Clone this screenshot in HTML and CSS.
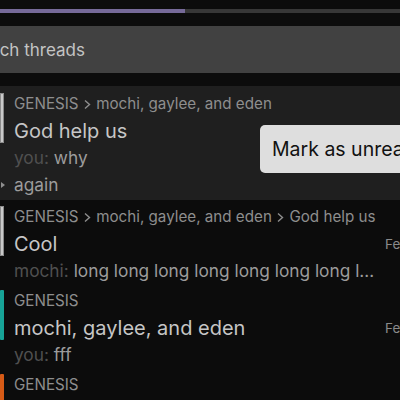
FILE: index.html
```html
<!DOCTYPE html>
<html>
<head>
  <meta name="viewport" content="width=device-width,initial-scale=1.0">
  <title>Threads</title>
  <link rel="stylesheet" href="styles.css">
</head>
<body>
  <div class="top">
    <div class="progress"><div class="progress-fill"></div></div>
    <div class="search">Search threads</div>
  </div>

  <ul class="threads">
    <li class="thread thread-hover">
      <span class="bar bar-grey"></span>
      <div class="path">GENESIS <svg class="sep" width="9" height="11" viewBox="0 0 9 11"><path d="M2 1.5 L6.5 5.5 L2 9.5" fill="none" stroke="currentColor" stroke-width="1.4"/></svg> mochi, gaylee, and eden</div>
      <div class="title">God help us</div>
      <div class="preview"><span class="author">you:</span> why</div>
      <svg class="more" width="6" height="8" viewBox="0 0 6 8"><path d="M0 1 L4 4 L0 7 Z" fill="currentColor"/></svg>
      <div class="preview">again</div>
    </li>
    <li class="thread">
      <span class="bar bar-grey"></span>
      <div class="path">GENESIS <svg class="sep" width="9" height="11" viewBox="0 0 9 11"><path d="M2 1.5 L6.5 5.5 L2 9.5" fill="none" stroke="currentColor" stroke-width="1.4"/></svg> mochi, gaylee, and eden <svg class="sep" width="9" height="11" viewBox="0 0 9 11"><path d="M2 1.5 L6.5 5.5 L2 9.5" fill="none" stroke="currentColor" stroke-width="1.4"/></svg> God help us</div>
      <div class="title">Cool</div>
      <div class="date">Feb 12</div>
      <div class="preview"><span class="author">mochi:</span> long long long long long long long long long long</div>
    </li>
    <li class="thread">
      <span class="bar bar-teal"></span>
      <div class="path">GENESIS</div>
      <div class="title">mochi, gaylee, and eden</div>
      <div class="date">Feb 10</div>
      <div class="preview"><span class="author">you:</span> fff</div>
    </li>
    <li class="thread">
      <span class="bar bar-orange"></span>
      <div class="path">GENESIS</div>
      <div class="title">general</div>
      <div class="date">Feb 8</div>
      <div class="preview"><span class="author">eden:</span> ok</div>
    </li>
  </ul>

  <div class="tooltip">Mark as unread</div>
</body>
</html>
```

FILE: styles.css
```css
body {
  margin: 0;
  background: #0c0c0c;
  font-family: Inter, "Noto Sans", sans-serif;
  overflow: hidden;
  width: 400px;
  height: 400px;
  position: relative;
}

.top {
  padding-top: 9px;
}

.progress {
  height: 4px;
  background: #373737;
}

.progress-fill {
  width: 185px;
  height: 100%;
  background: #766a99;
}

.search {
  margin-top: 13px;
  height: 47px;
  line-height: 49px;
  background: #414141;
  color: #c4c4c4;
  font-size: 17px;
  text-indent: -37px;
  white-space: nowrap;
  overflow: hidden;
}

.threads {
  list-style-type: none;
  margin: 13px 0 0;
  padding: 0;
}

.thread {
  display: grid;
  grid-template-columns: 14px 364px 60px;
  grid-auto-rows: 27px;
  padding-top: 3px;
  width: 440px;
}

.thread-hover {
  background: #1f1f1f;
  padding: 4px 0 2px;
}

.bar {
  grid-column: 1;
  grid-row: 1 / 3;
  width: 4px;
  height: 50px;
  margin-top: 3px;
  border-radius: 1px;
}

.bar-grey {
  background: #c9c9c9;
  box-shadow: inset 0 0 0 1px #8a8a8a;
}

.bar-teal {
  background: #17a397;
}

.bar-orange {
  background: #d65a16;
}

.path,
.title,
.preview {
  grid-column: 2;
  white-space: nowrap;
  overflow: hidden;
  text-overflow: ellipsis;
  line-height: 27px;
}

.path {
  font-size: 15.2px;
  color: #8e8e8e;
}

.sep {
  vertical-align: -1px;
}

.title {
  font-size: 20px;
  line-height: 29px;
  color: #c6c6c6;
}

.preview {
  font-size: 17.3px;
  color: #9c9c9c;
}

.author {
  color: #505050;
}

.more {
  grid-column: 1;
  grid-row: 4;
  align-self: center;
  margin-left: 1px;
  color: #8e8e8e;
}

.date {
  grid-column: 3;
  grid-row: 2;
  padding-left: 7px;
  font-size: 13.5px;
  line-height: 29px;
  color: #8a8a8a;
  white-space: nowrap;
}

.tooltip {
  position: absolute;
  left: 260px;
  top: 125px;
  width: 180px;
  height: 48px;
  box-sizing: border-box;
  padding-left: 12px;
  line-height: 48px;
  background: #dedede;
  color: #111;
  border-radius: 5px;
  font-size: 19.5px;
  white-space: nowrap;
}
```
